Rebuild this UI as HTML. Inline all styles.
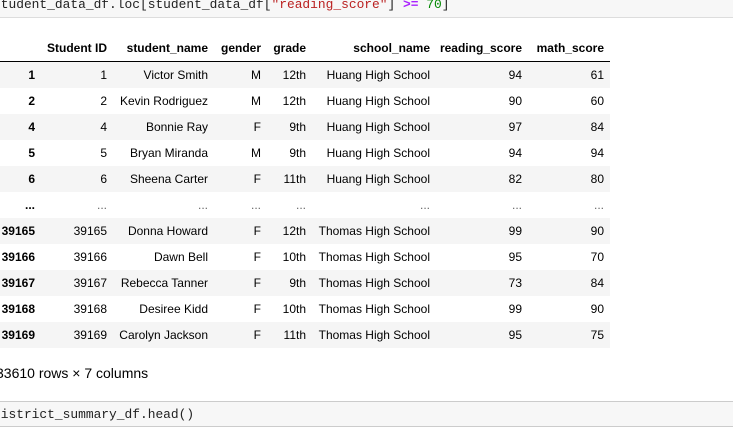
<!DOCTYPE html>
<html><head><style>
html,body{margin:0;padding:0;background:#fff;overflow:hidden;width:733px;height:433px;}
#w{position:absolute;left:0;top:0;width:733px;height:433px;font-family:"Liberation Sans",Arial,sans-serif;font-size:12px;color:#000;}
.code{position:absolute;left:0;width:733px;background:#f7f7f7;font-family:"Liberation Mono",monospace;font-size:12.9px;color:#222;}
.row{position:absolute;left:0;width:610px;height:26px;line-height:27px;}
.g{background:#f5f5f5;}
.c{position:absolute;top:0;white-space:nowrap;text-align:right;}
.h{font-weight:bold;}
</style></head><body><div id="w">
<div class="code" style="top:0;height:17px;border-bottom:1px solid #ddd;line-height:12px;"><span style="position:absolute;left:-7px;top:-1px;white-space:pre">student_data_df.loc[student_data_df[<span style="color:#ba2121">"reading_score"</span>] <span style="color:#a2f;font-weight:bold">&gt;=</span> <span style="color:#080">70</span>]</span></div>

<div class="row h" style="top:35px;border-bottom:1.5px solid #000;height:26px;">
<span class="c" style="right:503px">Student ID</span><span class="c" style="right:402px">student_name</span><span class="c" style="right:349px">gender</span><span class="c" style="right:304px">grade</span><span class="c" style="right:180px">school_name</span><span class="c" style="right:88px">reading_score</span><span class="c" style="right:6px">math_score</span>
</div>
<div id="rows"></div>

<div style="position:absolute;left:-4px;top:365px;font-size:14px;white-space:nowrap">33610 rows × 7 columns</div>
<div class="code" style="top:401px;height:24px;border-top:1px solid #ccc;border-bottom:1px solid #ccc;line-height:25px;"><span style="position:absolute;left:-7px;white-space:pre">district_summary_df.head()</span></div>
</div>
<script>
var d=[["1","1","Victor Smith","M","12th","Huang High School","94","61"],["2","2","Kevin Rodriguez","M","12th","Huang High School","90","60"],["4","4","Bonnie Ray","F","9th","Huang High School","97","84"],["5","5","Bryan Miranda","M","9th","Huang High School","94","94"],["6","6","Sheena Carter","F","11th","Huang High School","82","80"],["...","...","...","...","...","...","...","..."],["39165","39165","Donna Howard","F","12th","Thomas High School","99","90"],["39166","39166","Dawn Bell","F","10th","Thomas High School","95","70"],["39167","39167","Rebecca Tanner","F","9th","Thomas High School","73","84"],["39168","39168","Desiree Kidd","F","10th","Thomas High School","99","90"],["39169","39169","Carolyn Jackson","F","11th","Thomas High School","95","75"]];
var r=[575,503,402,349,304,180,88,6],h="";
d.forEach(function(a,i){h+='<div class="row'+(i%2==0?' g':'')+'" style="top:'+(62+i*26)+'px">';a.forEach(function(v,j){h+='<span class="c'+(j==0?' h':'')+'" style="right:'+r[j]+'px;'+(v=="..."&&j>0?'color:#666':'')+'">'+v+'</span>';});h+='</div>';});
document.getElementById('rows').outerHTML=h;
</script>
</body></html>
